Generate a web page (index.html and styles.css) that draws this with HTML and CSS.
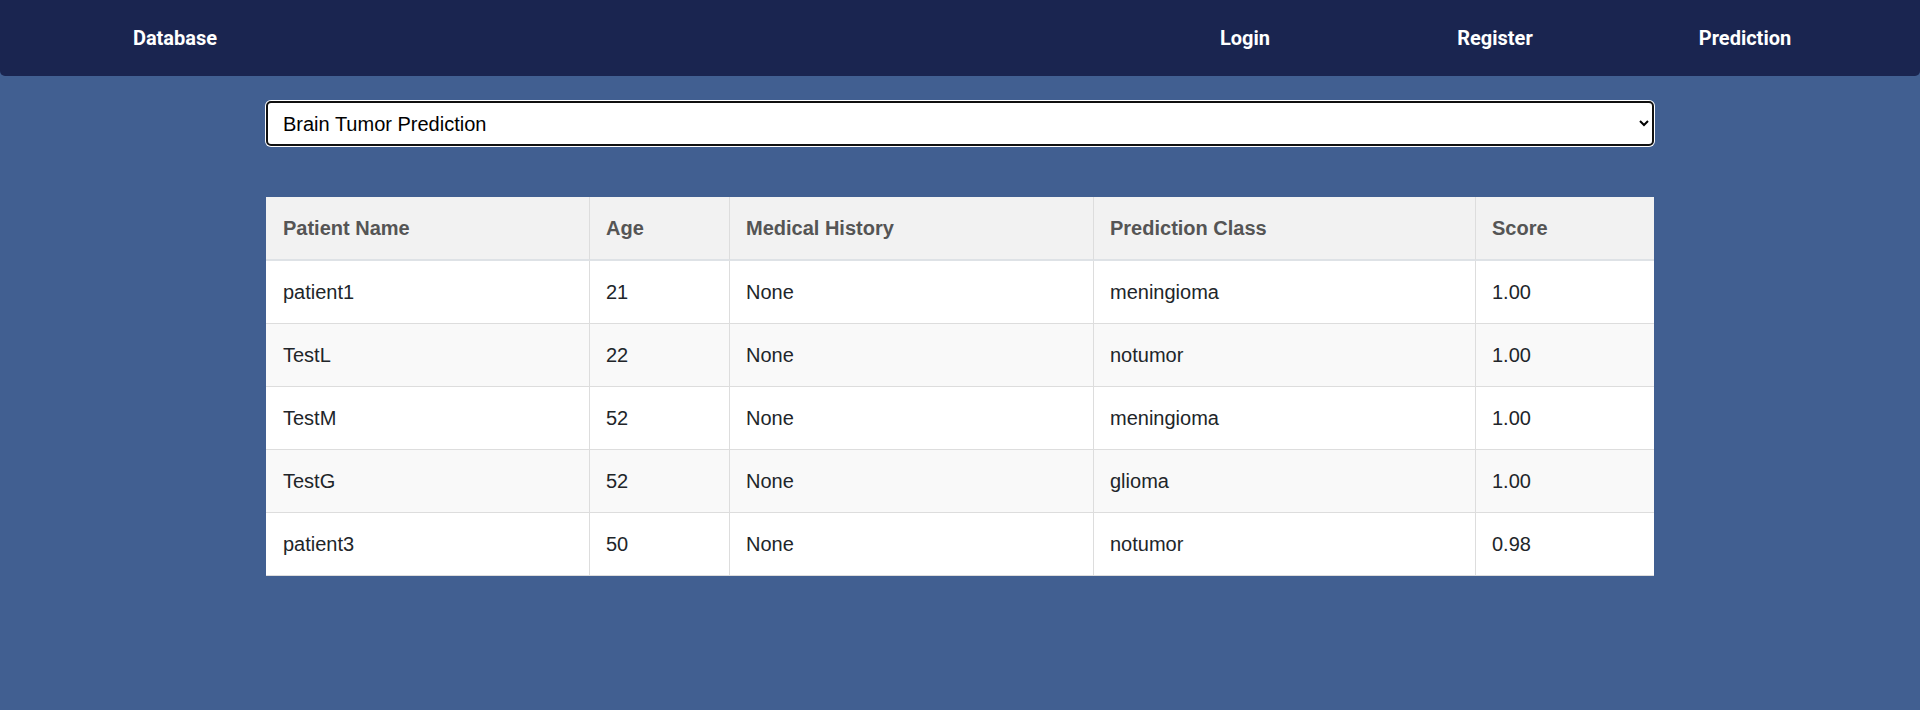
FILE: index.html
```html
<!DOCTYPE html>
<html lang="en">
<head>
<meta charset="utf-8">
<title>Database</title>
<link rel="stylesheet" href="styles.css">
</head>
<body>
<nav class="navbar">
  <a class="nav-item" href="#">Database</a>
  <div class="nav-right">
    <a class="nav-item" href="#">Login</a>
    <a class="nav-item" href="#">Register</a>
    <a class="nav-item" href="#">Prediction</a>
  </div>
</nav>
<main class="content">
  <select class="model-select">
    <option>Brain Tumor Prediction</option>
  </select>
  <table class="data-table">
    <colgroup>
      <col class="c1"><col class="c2"><col class="c3"><col class="c4"><col class="c5">
    </colgroup>
    <thead>
      <tr><th>Patient Name</th><th>Age</th><th>Medical History</th><th>Prediction Class</th><th>Score</th></tr>
    </thead>
    <tbody>
      <tr><td>patient1</td><td>21</td><td>None</td><td>meningioma</td><td>1.00</td></tr>
      <tr><td>TestL</td><td>22</td><td>None</td><td>notumor</td><td>1.00</td></tr>
      <tr><td>TestM</td><td>52</td><td>None</td><td>meningioma</td><td>1.00</td></tr>
      <tr><td>TestG</td><td>52</td><td>None</td><td>glioma</td><td>1.00</td></tr>
      <tr><td>patient3</td><td>50</td><td>None</td><td>notumor</td><td>0.98</td></tr>
    </tbody>
  </table>
</main>
</body>
</html>
```
FILE: styles.css
```css
html, body {
  margin: 0;
  padding: 0;
}
body {
  background: #415f91;
  font-family: "Liberation Sans", Arial, sans-serif;
  min-height: 710px;
}
.navbar {
  display: flex;
  justify-content: space-between;
  align-items: center;
  height: 76px;
  padding: 0 50px;
  background: #1a2550;
  border-radius: 0 0 5px 5px;
  box-sizing: border-box;
}
.nav-right {
  display: flex;
}
.nav-item {
  display: block;
  width: 250px;
  text-align: center;
  color: #ffffff;
  text-decoration: none;
  font-family: Roboto, "Liberation Sans", sans-serif;
  font-weight: 700;
  font-size: 20px;
  line-height: 24px;
}
.content {
  width: 1388px;
  margin: 0 auto;
  padding-top: 25px;
  display: flex;
  flex-direction: column;
}
.model-select {
  display: block;
  width: 100%;
  height: 45px;
  box-sizing: border-box;
  border: 2px solid #101010;
  border-radius: 5px;
  box-shadow: 0 0 0 1px #ffffff;
  background: #ffffff;
  color: #000000;
  font-family: "Liberation Sans", Arial, sans-serif;
  font-size: 20px;
  padding: 0 10px 0 11px;
  outline: none;
}
.data-table {
  margin-top: 51px;
  width: 100%;
  border-collapse: separate;
  border-spacing: 0;
  table-layout: fixed;
  font-size: 20px;
  line-height: 30px;
  background: #ffffff;
}
.c1 { width: 323px; }
.c2 { width: 140px; }
.c3 { width: 364px; }
.c4 { width: 382px; }
.c5 { width: 179px; }
.data-table th,
.data-table td {
  text-align: left;
  padding: 16px 16px 16px 16px;
  border-left: 1px solid #dddddd;
}
.data-table th:first-child,
.data-table td:first-child {
  border-left: none;
  padding-left: 17px;
}
.data-table th {
  background: #f2f2f2;
  color: #555555;
  font-weight: 700;
  border-bottom: 2px solid #dee2e6;
}
.data-table td {
  color: #212529;
  border-bottom: 1px solid #dddddd;
}
.data-table tbody tr:nth-child(even) td {
  background: #f9f9f9;
}
```
